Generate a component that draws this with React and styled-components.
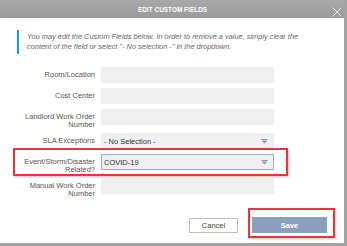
import React from 'react'
import styled, { createGlobalStyle } from 'styled-components'

const GlobalStyle = createGlobalStyle`
    html, body {
        margin: 0;
        padding: 0;
        background: #a3a3a3;
        font-family: "Liberation Sans", Arial, sans-serif;
    }
`

const fields = [
    { label: 'Room/Location' },
    { label: 'Cost Center' },
    { label: 'Landlord Work Order Number' },
    { label: 'SLA Exceptions', select: '- No Selection -' },
]

const Arrow = () => (
    <svg width="7" height="5" viewBox="0 0 7 5">
        <rect x="0.5" y="0" width="6" height="1" fill="#8a9ab0" />
        <polygon points="0.5,1.5 6.5,1.5 3.5,4.5" fill="#8a9ab0" />
    </svg>
)

export default function App() {
    return (
        <>
            <GlobalStyle />
            <Page>
                <Dialog>
                    <Header>
                        <Title>EDIT CUSTOM FIELDS</Title>
                        <Close>
                            <svg width="10" height="10" viewBox="0 0 10 10">
                                <path d="M0.5 0.5 L9.5 9.5 M9.5 0.5 L0.5 9.5" stroke="#e6e6e6" strokeWidth="1" />
                            </svg>
                        </Close>
                    </Header>
                    <Notice>
                        You may edit the Custom Fields below. In order to remove a value, simply clear the<br />
                        content of the field or select "- No selection -" in the dropdown.
                    </Notice>
                    <Form>
                        {fields.map(f => (
                            <Row key={f.label}>
                                <Label>{f.label}</Label>
                                {f.select ?
                                    <Select>
                                        <span>{f.select}</span>
                                        <Arrow />
                                    </Select> :
                                    <Input />
                                }
                            </Row>
                        ))}
                        <Highlight>
                            <Row $labelWidth={80}>
                                <Label>Event/Storm/Disaster Related?</Label>
                                <Select $focused>
                                    <span>COVID-19</span>
                                    <Arrow />
                                </Select>
                            </Row>
                        </Highlight>
                        <Row>
                            <Label>Manual Work Order Number</Label>
                            <Input />
                        </Row>
                    </Form>
                    <Footer>
                        <CancelButton>Cancel</CancelButton>
                        <SaveBox>
                            <SaveButton>Save</SaveButton>
                        </SaveBox>
                    </Footer>
                </Dialog>
            </Page>
        </>
    )
}

const Page = styled.div`
    width: 347px;
    height: 246px;
    overflow: hidden;
`

const Dialog = styled.div`
    width: 344px;
    height: 243px;
    background: #fff;
    display: flex;
    flex-direction: column;
`

const Header = styled.div`
    height: 18px;
    background: linear-gradient(#a8a8a8, #9b9b9b);
    display: flex;
    align-items: center;
    justify-content: center;
    position: relative;
`

const Title = styled.div`
    color: #fff;
    font-weight: bold;
    font-size: 6.3px;
    letter-spacing: 0.1px;
    margin-left: 1px;
`

const Close = styled.div`
    position: absolute;
    right: 2px;
    top: 7px;
    line-height: 0;
`

const Notice = styled.div`
    margin: 12px 0 0 17px;
    border-left: 2px solid #1a9be0;
    padding: 2px 0 2px 8px;
    width: 300px;
    white-space: nowrap;
    font-size: 7.4px;
    line-height: 10px;
    font-style: italic;
    color: #666;
`

const Form = styled.div`
    margin-top: 13px;
    display: flex;
    flex-direction: column;
    gap: 5px;
`

const Row = styled.div`
    display: grid;
    grid-template-columns: ${p => p.$labelWidth || 95}px 173px;
    column-gap: 6px;
    align-items: start;
`

const Label = styled.div`
    justify-self: end;
    max-width: 73px;
    text-align: right;
    font-size: 7.5px;
    line-height: 7.5px;
    padding-top: 4px;
    color: #555;
`

const Input = styled.div`
    height: 16px;
    background: #efefef;
`

const Select = styled.div`
    height: 16px;
    box-sizing: border-box;
    background: #efefef;
    border: 1px solid ${p => p.$focused ? '#8db3e6' : '#efefef'};
    display: flex;
    align-items: center;
    justify-content: space-between;
    padding: 0 5px 0 2px;
    font-size: 7.5px;
    color: #333;
`

const Highlight = styled.div`
    margin: -6px 0 -3px 13px;
    width: 275px;
    box-sizing: border-box;
    border: 2px solid #e8343c;
    padding: 4px 0 1px;
    box-shadow: 1px 1px 2px rgba(0, 0, 0, 0.25);
`

const Footer = styled.div`
    margin-top: 11px;
    display: flex;
    justify-content: flex-end;
    align-items: flex-end;
    gap: 10px;
    padding-right: 9px;
`

const CancelButton = styled.div`
    width: 49px;
    height: 15px;
    box-sizing: border-box;
    margin-bottom: 5px;
    border: 1px solid #bdbdbd;
    background: #fff;
    color: #444;
    font-size: 7.5px;
    display: flex;
    align-items: center;
    justify-content: center;
`

const SaveBox = styled.div`
    border: 2px solid #e8343c;
    padding: 7px 6px 3px 2px;
    box-shadow: 1px 1px 2px rgba(0, 0, 0, 0.25);
`

const SaveButton = styled.div`
    width: 75px;
    height: 16px;
    background: #8b9fbd;
    color: #fff;
    font-weight: bold;
    font-size: 7.5px;
    display: flex;
    align-items: center;
    justify-content: center;
`
